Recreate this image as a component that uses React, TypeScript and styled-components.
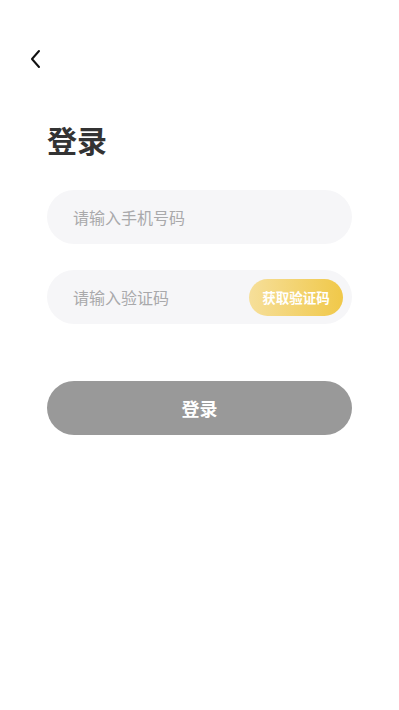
import React from 'react';
import styled, { createGlobalStyle } from 'styled-components';

const GlobalStyle = createGlobalStyle`
  html, body {
    margin: 0;
    padding: 0;
    background: #ffffff;
  }
  body {
    font-family: 'Noto Sans CJK SC', 'Noto Sans', sans-serif;
  }
  * {
    box-sizing: border-box;
  }
`;

const Page = styled.div`
  width: 399px;
  min-height: 710px;
  background: #fff;
  padding: 47px 47px 0 47px;
`;

const BackButton = styled.button`
  display: flex;
  align-items: center;
  justify-content: center;
  width: 24px;
  height: 24px;
  margin-left: -23px;
  padding: 0;
  border: none;
  background: none;
  color: #111;
`;

const Title = styled.h1`
  margin: 48px 0 0 0;
  font-size: 30px;
  line-height: 40px;
  font-weight: 700;
  color: #333;
`;

const Form = styled.div`
  margin-top: 31px;
  display: flex;
  flex-direction: column;
  gap: 26px;
`;

const Field = styled.div`
  height: 54px;
  border-radius: 27px;
  background: #f6f6f8;
  display: flex;
  align-items: center;
  padding: 0 9px 0 24px;
`;

const Input = styled.input`
  flex: 1;
  min-width: 0;
  border: none;
  outline: none;
  background: transparent;
  font-family: inherit;
  font-size: 16px;
  color: #333;

  &::placeholder {
    color: #a9a9ab;
  }
`;

const CodeButton = styled.button`
  height: 37px;
  width: 94px;
  border: none;
  border-radius: 19px;
  background: linear-gradient(90deg, #f6df9a 0%, #f0c849 100%);
  color: #fff;
  font-family: inherit;
  font-size: 13.5px;
  font-weight: 700;
  padding: 0;
`;

const SubmitButton = styled.button`
  margin-top: 57px;
  width: 100%;
  height: 54px;
  border: none;
  border-radius: 27px;
  background: #999999;
  color: #fff;
  font-family: inherit;
  font-size: 18px;
  font-weight: 700;
`;

const App = () => {
  return (
    <Page>
      <GlobalStyle />
      <BackButton aria-label="back">
        <svg width="14" height="20" viewBox="0 0 14 20" fill="none">
          <path d="M10 2 L3 10 L10 18" stroke="#111" strokeWidth="2" strokeLinecap="round" strokeLinejoin="round" />
        </svg>
      </BackButton>
      <Title>登录</Title>
      <Form>
        <Field>
          <Input placeholder="请输入手机号码" />
        </Field>
        <Field>
          <Input placeholder="请输入验证码" />
          <CodeButton>获取验证码</CodeButton>
        </Field>
      </Form>
      <SubmitButton>登录</SubmitButton>
    </Page>
  );
};

export default App;
